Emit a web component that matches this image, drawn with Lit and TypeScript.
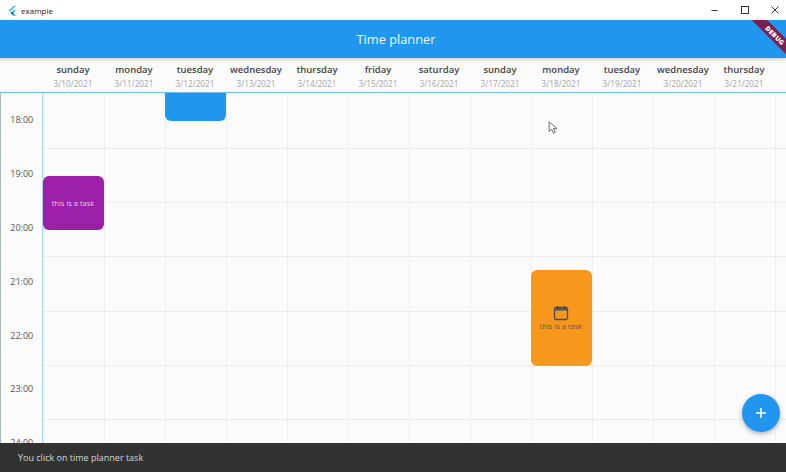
import { html, css, LitElement, svg } from 'lit'
import { customElement } from 'lit/decorators.js'

const days = [
  ['sunday', '3/10/2021'],
  ['monday', '3/11/2021'],
  ['tuesday', '3/12/2021'],
  ['wednesday', '3/13/2021'],
  ['thursday', '3/14/2021'],
  ['friday', '3/15/2021'],
  ['saturday', '3/16/2021'],
  ['sunday', '3/17/2021'],
  ['monday', '3/18/2021'],
  ['tuesday', '3/19/2021'],
  ['wednesday', '3/20/2021'],
  ['thursday', '3/21/2021'],
]
const hours = ['18:00', '19:00', '20:00', '21:00', '22:00', '23:00', '24:00']

const COL = 61
const ROW = 54.2

// placed on the planner canvas: day column, hour offset, length in hours
const tasks = [
  { day: 2, start: -0.48, len: 1, color: '#2196ee', text: '', icon: false, dark: false },
  { day: 0, start: 1.53, len: 1, color: '#9c1fa8', text: 'this is a task', icon: false, dark: false },
  { day: 8, start: 3.27, len: 1.76, color: '#f7981d', text: 'this is a task', icon: true, dark: true },
]

const calendarIcon = svg`<svg class="cal" viewBox="0 0 16 16" width="16" height="16">
  <rect x="1.5" y="2.5" width="13" height="12" rx="1.5" fill="none" stroke="#4a4a52" stroke-width="1.3"/>
  <rect x="1.5" y="2.5" width="13" height="3" fill="#4a5570"/>
  <path d="M4.5 1v3M11.5 1v3" stroke="#4a4a52" stroke-width="1.3"/>
</svg>`

@customElement('app-root')
export class AppRoot extends LitElement {
  static styles = css`
    :host {
      display: block;
      position: relative;
      width: 786px;
      height: 472px;
      overflow: hidden;
      background: #fbfbfc;
      font-family: 'Open Sans', 'Noto Sans', sans-serif;
      color: #333;
    }
    .titlebar {
      height: 20px;
      display: flex;
      align-items: center;
      padding-left: 8px;
      gap: 4px;
      background: #fff;
      font-size: 8px;
      color: #222;
    }
    .title {
      flex: 1;
    }
    .controls {
      display: flex;
      margin-right: -4px;
    }
    .win {
      width: 30px;
      display: flex;
      justify-content: center;
    }
    .appbar {
      height: 38px;
      background: #2196ee;
      color: #f2f8fe;
      display: flex;
      align-items: center;
      justify-content: center;
      font-size: 12.8px;
      padding-left: 6px;
      box-shadow: 0 1px 3px rgba(0, 0, 0, 0.25);
      position: relative;
    }
    .banner {
      position: absolute;
      top: 20px;
      right: 0;
      width: 40px;
      height: 40px;
      overflow: hidden;
    }
    .ribbon {
      position: absolute;
      top: 10px;
      right: -24px;
      width: 70px;
      height: 11px;
      line-height: 11px;
      background: #7a2050;
      color: #fff;
      font-size: 6.5px;
      font-weight: 800;
      letter-spacing: 0.3px;
      text-align: center;
      transform: rotate(45deg);
    }
    .header {
      height: 34px;
      padding-left: 43px;
      display: grid;
      grid-template-columns: repeat(12, 61px);
      border-bottom: 1px solid #6fbcf0;
      text-align: center;
    }
    .day {
      padding: 5px 1px 0 0;
      font-size: 9.5px;
      font-weight: 600;
      line-height: 13px;
      color: #444;
    }
    .date {
      display: block;
      font-size: 8.2px;
      font-weight: 400;
      line-height: 15px;
      color: #a6a6a6;
    }
    .planner {
      display: flex;
      height: 379px;
    }
    .hours {
      width: 41.5px;
      flex: none;
      border-right: 1.5px solid #a9d3f5;
      box-shadow: inset 1px 0 0 #a9bdb8;
    }
    .hour {
      height: 53.8px;
      padding-left: 2px;
      display: flex;
      align-items: center;
      justify-content: center;
      box-sizing: border-box;
      font-size: 9px;
      color: #555;
    }
    .canvas {
      position: relative;
      flex: 1;
      overflow: hidden;
    }
    .cells {
      display: grid;
      grid-template-columns: repeat(13, 61px);
      grid-template-rows: 56px;
      grid-auto-rows: 54.2px;
    }
    .cell {
      box-sizing: border-box;
      border-left: 1px solid #f0f0f0;
      border-bottom: 1px solid #ececec;
    }
    .task {
      position: absolute;
      box-sizing: border-box;
      width: 61px;
      border-radius: 6px;
      display: flex;
      flex-direction: column;
      align-items: center;
      justify-content: center;
      font-size: 7.5px;
      color: #e6c9ea;
    }
    .task.dark {
      color: #6a5a45;
    }
    .cal {
      display: block;
    }
    .snack {
      position: absolute;
      left: 0;
      right: 0;
      bottom: 0;
      height: 29px;
      padding-left: 18px;
      display: flex;
      align-items: center;
      background: #323232;
      color: #d4d4d4;
      font-size: 9px;
    }
    .fab {
      position: absolute;
      left: 742px;
      top: 394px;
      width: 38px;
      height: 38px;
      border-radius: 50%;
      background: #2196ee;
      display: flex;
      align-items: center;
      justify-content: center;
      box-shadow: 0 2px 5px rgba(0, 0, 0, 0.3);
    }
    .pointer {
      position: absolute;
      left: 548px;
      top: 121px;
    }
  `

  render() {
    return html`
      <div class="titlebar">
        <svg viewBox="0 0 12 14" width="9" height="11">
          <path d="M7.5 0.5h3.5L4 7.5 2.5 9 0.5 7z" fill="#54c5f8" />
          <path d="M7.5 6.5h3.5L6.8 10.7 11 14H7.5L3.6 10.2z" fill="#29b6f6" />
          <path d="M3.6 10.2l1.7-1.7 1.5 2.2L7.5 14z" fill="#01579b" />
        </svg>
        <span class="title">example</span>
        <div class="controls">
          <span class="win">
            <svg width="10" height="10"><path d="M1.5 5.5h6" stroke="#333" /></svg>
          </span>
          <span class="win">
            <svg width="10" height="10"><rect x="1.5" y="1.5" width="7" height="7" fill="none" stroke="#333" /></svg>
          </span>
          <span class="win">
            <svg width="10" height="10"><path d="M1.5 1.5l7 7M8.5 1.5l-7 7" stroke="#333" /></svg>
          </span>
        </div>
      </div>
      <div class="appbar">Time planner</div>
      <div class="banner"><div class="ribbon">DEBUG</div></div>
      <div class="header">
        ${days.map(([name, date]) => html`<div class="day">${name}<span class="date">${date}</span></div>`)}
      </div>
      <div class="planner">
        <div class="hours">
          ${hours.map((h) => html`<div class="hour">${h}</div>`)}
        </div>
        <div class="canvas">
          <div class="cells">
            ${hours.map(() => [...days, []].map(() => html`<div class="cell"></div>`))}
          </div>
          ${tasks.map(
            (t) => html`<div
              class="task ${t.dark ? 'dark' : ''}"
              style="left:${t.day * COL}px;top:${t.start * ROW}px;height:${t.len * ROW}px;background:${t.color}"
            >
              ${t.icon ? calendarIcon : ''}
              <span>${t.text}</span>
            </div>`,
          )}
        </div>
      </div>
      <svg class="pointer" viewBox="0 0 12 16" width="11" height="14">
        <path d="M1 1v11l3-2.5 2 4.5 2-1-2-4.3h4z" fill="#fff" stroke="#555" stroke-width="1" />
      </svg>
      <div class="fab">
        <svg width="12" height="12"><path d="M6 1v10M1 6h10" stroke="#fff" stroke-width="1.6" /></svg>
      </div>
      <div class="snack">You click on time planner task</div>
    `
  }
}
